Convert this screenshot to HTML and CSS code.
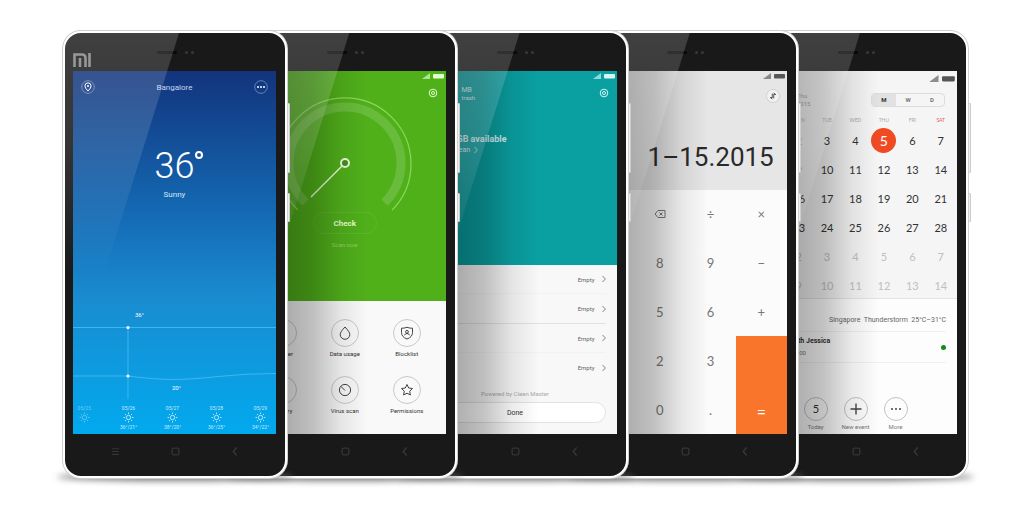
FILE: index.html
```html
<!DOCTYPE html>
<html lang="en">
<head>
<meta charset="utf-8">
<title>Mi phones</title>
<link rel="stylesheet" href="styles.css">
</head>
<body>
<svg class="defs" width="0" height="0" aria-hidden="true">
  <defs>
    <symbol id="status" viewBox="0 0 22 6"><path d="M0 6 8 0V6Z" opacity=".65"/><rect x="11" y="1" width="11" height="4.500" rx="1"/></symbol>
    <symbol id="home" viewBox="0 0 8 8"><rect x="1" y="1" width="6" height="6" rx="1.5" fill="none" stroke="#343434" stroke-width="1.2"/></symbol>
    <symbol id="back" viewBox="0 0 8 8"><path d="M5 0.5 2 4 5 7.5" fill="none" stroke="#383838" stroke-width="1.2"/></symbol>
    <symbol id="gear" viewBox="0 0 10 10"><circle cx="5" cy="5" r="3.8" fill="none" stroke="currentColor"/><circle cx="5" cy="5" r="1.5" fill="none" stroke="currentColor"/></symbol>
    <symbol id="chev" viewBox="0 0 4 8"><path d="M.5 1 3.4 4 .5 7" fill="none" stroke="currentColor" stroke-width=".8"/></symbol>
    <symbol id="sun" viewBox="0 0 12 12"><g fill="none" stroke="currentColor"><circle cx="6" cy="6" r="2.4"/><path d="M6 .6V2.2M6 9.8v1.6M.6 6h1.6M9.8 6h1.6M2.2 2.2l1.1 1.1M8.7 8.7l1.1 1.1M2.2 9.8l1.1-1.1M8.7 3.3l1.1-1.1"/></g></symbol>
  </defs>
</svg>
<main class="lineup">

  <section class="phone p1">
    <div class="face">
      <header class="bezel-top">
        <svg class="logo" viewBox="0 0 18 14" role="img" aria-label="Mi"><path d="M1.5 14V1.5H9Q12.500 1.500 12.500 5V14M7 5V14M16.500 0V14" fill="none" stroke="#858585" stroke-width="2.600"/></svg>
        <i class="speaker"></i><i class="sensor"></i><i class="sensor"></i>
      </header>
      <div class="screen weather">
        <div class="w-bar">
          <button class="w-btn" aria-label="Location"><svg viewBox="0 0 14 14"><circle cx="7" cy="7" r="6.300" fill="none" stroke="#8a9fd0" stroke-width=".7"/><path d="M7 11Q3.900 8 3.900 6a3.100 3.100 0 0 1 6.200 0Q10.100 8 7 11Z" fill="none" stroke="#fff"/><circle cx="7" cy="6" r="1" fill="#fff"/></svg></button>
          <span>Bangalore</span>
          <button class="w-btn" aria-label="More"><svg viewBox="0 0 14 14"><circle cx="7" cy="7" r="6.300" fill="none" stroke="#8a9fd0" stroke-width=".7"/><g fill="#fff"><circle cx="4" cy="7" r="1"/><circle cx="7" cy="7" r="1"/><circle cx="10" cy="7" r="1"/></g></svg></button>
        </div>
        <div class="temp">36<i class="degree"></i></div>
        <div class="cond">Sunny</div>
        <svg class="chart" viewBox="0 0 203 100">
          <g fill="none" stroke="#4cbcf1" stroke-width=".8"><path d="M0 22.500H203" /><path d="M55 22V94"/><path d="M0 71H55Q82 74.500 100 74.500Q118 74.500 145 71.500T203 68.500"/></g>
          <g fill="#fff"><circle cx="55" cy="22.500" r="1.600"/><circle cx="55" cy="71" r="1.600"/><text x="62" y="12">36°</text><text x="99" y="85">20°</text></g>
        </svg>
        <div class="days">
          <div class="past"><span>05/25</span><svg><use href="#sun"/></svg></div>
          <div><span>05/26</span><svg><use href="#sun"/></svg><span>36°/21°</span></div>
          <div><span>05/27</span><svg><use href="#sun"/></svg><span>38°/20°</span></div>
          <div><span>05/28</span><svg><use href="#sun"/></svg><span>36°/25°</span></div>
          <div><span>05/29</span><svg><use href="#sun"/></svg><span>34°/22°</span></div>
        </div>
      </div>
      <footer class="bezel-bottom"><svg viewBox="0 0 8 8"><path d="M1 1.500H7M1 4H7M1 6.500H7" stroke="#363636"/></svg><svg><use href="#home"/></svg><svg><use href="#back"/></svg></footer>
    </div>
    <i class="side long"></i><i class="side short"></i>
  </section>

  <section class="phone p2 behind">
    <div class="face">
      <header class="bezel-top"><i class="speaker"></i><i class="sensor"></i><i class="sensor"></i></header>
      <div class="screen security">
        <div class="green">
          <svg class="status"><use href="#status"/></svg>
          <button class="gear" aria-label="Settings"><svg><use href="#gear"/></svg></button>
          <svg class="gauge" viewBox="0 0 136 116" aria-hidden="true">
            <path d="M20.900 114.100A66 66 0 1 1 115.100 114.100" fill="none" stroke="#8fd65c" stroke-width="1.200"/>
            <path d="M28.400 106.600A56 56 0 1 1 107.600 106.600" fill="none" stroke="#69bc3b" stroke-width="9"/>
            <path d="M65 70 34 101" stroke="#e8ffd8" stroke-width="1.500"/>
            <circle cx="68" cy="67" r="4" fill="#4a8d24" stroke="#e8ffd8" stroke-width="2"/>
          </svg>
          <button class="check">Check</button>
          <span class="scan">Scan now</span>
        </div>
        <div class="tools">
          <button><svg viewBox="0 0 28 28"><circle cx="14" cy="14" r="13.500"/><path d="M15 8.500 18 12M18 9 19 10"/></svg><span>Cleaner</span></button>
          <button><svg viewBox="0 0 28 28"><circle cx="14" cy="14" r="13.500"/><path d="M14 8Q18.800 13 18.800 15.500a4.800 4.800 0 0 1-9.600 0Q9.200 13 14 8Z"/></svg><span>Data usage</span></button>
          <button><svg viewBox="0 0 28 28"><circle cx="14" cy="14" r="13.500"/><path d="M14 8.300Q17 9.400 19.500 9.200V13.500Q19.500 18 14 20Q8.500 18 8.500 13.500V9.200Q11 9.400 14 8.300Z"/><path d="M11.500 16.300Q12 14.500 14 14.500T16.500 16.300"/><circle cx="14" cy="12.800" r="1.400"/></svg><span>Blocklist</span></button>
          <button><svg viewBox="0 0 28 28"><circle cx="14" cy="14" r="13.500"/></svg><span>Battery</span></button>
          <button><svg viewBox="0 0 28 28"><circle cx="14" cy="14" r="13.500"/><circle cx="14" cy="14" r="5.600"/><path d="M14 14.500 10 10.500"/></svg><span>Virus scan</span></button>
          <button><svg viewBox="0 0 28 28"><circle cx="14" cy="14" r="13.500"/><path d="M14 8.500 15.700 12 19.500 12.500 16.700 15.200 17.400 19 14 17.200 10.600 19 11.300 15.200 8.500 12.500 12.300 12Z"/></svg><span>Permissions</span></button>
        </div>
      </div>
      <footer class="bezel-bottom"><i></i><svg><use href="#home"/></svg><svg><use href="#back"/></svg></footer>
    </div>
    <i class="side long"></i><i class="side short"></i>
  </section>

  <section class="phone p3 behind">
    <div class="face">
      <header class="bezel-top"><i class="speaker"></i><i class="sensor"></i><i class="sensor"></i></header>
      <div class="screen cleaner">
        <div class="teal">
          <svg class="status"><use href="#status"/></svg>
          <div class="c-bar"><div><b>MB</b><span>trash</span></div><button class="gear" aria-label="Settings"><svg><use href="#gear"/></svg></button></div>
          <strong>GB available</strong>
          <a href="#clean">Clean <svg><use href="#chev"/></svg></a>
        </div>
        <div class="rows">
          <a href="#r1">Empty <svg><use href="#chev"/></svg></a>
          <a href="#r2">Empty <svg><use href="#chev"/></svg></a>
          <a href="#r3">Empty <svg><use href="#chev"/></svg></a>
          <a href="#r4">Empty <svg><use href="#chev"/></svg></a>
          <small>Powered by Clean Master</small>
          <button class="done">Done</button>
        </div>
      </div>
      <footer class="bezel-bottom"><i></i><svg><use href="#home"/></svg><svg><use href="#back"/></svg></footer>
    </div>
    <i class="side long"></i><i class="side short"></i>
  </section>

  <section class="phone p4 behind">
    <div class="face">
      <header class="bezel-top"><i class="speaker"></i><i class="sensor"></i><i class="sensor"></i></header>
      <div class="screen calc">
        <div class="display">
          <svg class="status"><use href="#status"/></svg>
          <button class="swap" aria-label="Switch mode"><svg viewBox="0 0 14 14"><circle cx="7" cy="7" r="6.500" fill="#f2f2f2" stroke="#c4c4c4" stroke-width=".7"/><path d="M6.300 4.500V8.500H4.200L6.300 10M7.700 9.500V5.500H9.800L7.700 4" fill="none" stroke="#555"/></svg></button>
          <output>1–15.2015</output>
        </div>
        <div class="keys">
          <button class="c2" aria-label="Delete"><svg viewBox="0 0 12 10"><path d="M4 1.500H11V8.500H4L1 5ZM5.500 3.500l3 3M8.500 3.500l-3 3" fill="none" stroke="#777"/></svg></button><button>÷</button><button>×</button>
          <button class="c2">8</button><button>9</button><button>−</button>
          <button class="c2">5</button><button>6</button><button>+</button>
          <button class="c2">2</button><button>3</button><button class="equals">=</button>
          <button class="c2">0</button><button>.</button>
        </div>
      </div>
      <footer class="bezel-bottom"><i></i><svg><use href="#home"/></svg><svg><use href="#back"/></svg></footer>
    </div>
    <i class="side long"></i><i class="side short"></i>
  </section>

  <section class="phone p5 behind">
    <div class="face">
      <header class="bezel-top"><i class="speaker"></i><i class="sensor"></i><i class="sensor"></i></header>
      <div class="screen calendar">
        <div class="month">
          <svg class="status"><use href="#status"/></svg>
          <div class="m-bar"><div class="date"><span>Thu</span><span>2015</span></div><div class="seg"><button class="on">M</button><button>W</button><button>D</button></div></div>
          <table>
            <thead><tr><td></td><th>MON</th><th>TUE</th><th>WED</th><th>THU</th><th>FRI</th><th class="sat">SAT</th></tr></thead>
            <tbody>
              <tr><td></td><td>2</td><td>3</td><td>4</td><td><span class="today">5</span></td><td>6</td><td>7</td></tr>
              <tr><td></td><td>9</td><td>10</td><td>11</td><td>12</td><td>13</td><td>14</td></tr>
              <tr><td></td><td>16</td><td>17</td><td>18</td><td>19</td><td>20</td><td>21</td></tr>
              <tr><td></td><td>23</td><td>24</td><td>25</td><td>26</td><td>27</td><td>28</td></tr>
              <tr class="next"><td></td><td>2</td><td>3</td><td>4</td><td>5</td><td>6</td><td>7</td></tr>
              <tr class="next"><td></td><td>9</td><td>10</td><td>11</td><td>12</td><td>13</td><td>14</td></tr>
            </tbody>
          </table>
        </div>
        <div class="forecast">Singapore&nbsp; Thunderstorm&nbsp; 25°C–31°C</div>
        <div class="event"><div><b>with Jessica</b><span>10:00</span></div><i></i></div>
        <div class="actions">
          <button><svg viewBox="0 0 24 24"><circle cx="12" cy="12" r="11.500"/><text x="12" y="16" text-anchor="middle">5</text></svg><span>Today</span></button>
          <button><svg viewBox="0 0 24 24"><circle cx="12" cy="12" r="11.500"/><path d="M12 6.500V17.500M6.500 12H17.500"/></svg><span>New event</span></button>
          <button><svg viewBox="0 0 24 24"><circle cx="12" cy="12" r="11.500"/><path d="M7 12h2M11 12h2M15 12h2"/></svg><span>More</span></button>
        </div>
      </div>
      <footer class="bezel-bottom"><i></i><svg><use href="#home"/></svg><svg><use href="#back"/></svg></footer>
    </div>
    <i class="side long"></i><i class="side short"></i>
  </section>
</main>
</body>
</html>
```
FILE: styles.css
```css
* { box-sizing: border-box; }
body { margin: 0; background: #fff; font-family: Roboto, "Liberation Sans", sans-serif; font-size: 6px; }
button { border: 0; background: none; padding: 0; margin: 0; font: inherit; color: inherit; }
a { color: inherit; text-decoration: none; }
svg { display: block; }
.defs { position: absolute; }

.lineup { display: flex; justify-content: space-between; max-width: 1024px; margin: 0 auto; padding: 31px 56px 34px 63px; }
.phone { position: relative; flex: none; width: 224px; }
.phone + .phone { margin-left: -60px; }
.phone::before { content: ""; position: absolute; z-index: -1; left: -6px; right: -6px; bottom: -3px; height: 8px; border-radius: 50%; background: #777; filter: blur(3px); }
.p1 { z-index: 5; } .p2 { z-index: 4; } .p3 { z-index: 3; } .p4 { z-index: 2; } .p5 { z-index: 1; }

.face { position: relative; overflow: hidden; border: 2px solid #fff; border-radius: 18px; background: #19191a; box-shadow: 0 0 0 1px #cfcfcf; }
/* diagonal glass reflection */
.face::after { content: ""; position: absolute; inset: 0; pointer-events: none; background: linear-gradient(rgba(255,255,255,.17), rgba(255,255,255,.12) 25%, rgba(255,255,255,0) 55%); clip-path: polygon(0 0, 114px 0, 24px 290px, 0 290px); }
/* shade thrown by the phone in front */
.behind .screen::after { content: ""; position: absolute; inset: 0; pointer-events: none; background: linear-gradient(90deg, rgba(0,0,0,.32) 40px, rgba(0,0,0,.23) 70px, rgba(0,0,0,.08) 98px, rgba(0,0,0,0) 125px); }

.bezel-top { display: flex; align-items: center; justify-content: center; gap: 3px; height: 38px; position: relative; }
.speaker { width: 20px; height: 3px; border-radius: 2px; background: #080808; margin-right: 5px; }
.sensor { width: 3px; height: 3px; border-radius: 50%; background: #38383c; }
.logo { position: absolute; left: 8px; top: 20px; width: 18px; height: 14px; }
.screen { position: relative; margin: 0 9px 0 8px; min-height: 363px; overflow: hidden; display: flex; flex-direction: column; }
.bezel-bottom { display: grid; grid-template-columns: repeat(3, 60px); justify-content: center; justify-items: center; height: 42px; padding-top: 13px; }
.bezel-bottom svg { width: 9px; height: 9px; }
.side { position: absolute; z-index: -1; left: 222px; width: 5px; border: 1px solid #ccc; border-radius: 1px; background: #eee; }
.long { top: 72px; height: 70px; }
.short { top: 162px; height: 29px; }
.status { width: 22px; height: 6px; align-self: flex-end; flex: none; fill: currentColor; }
.gear { width: 14px; height: 14px; display: grid; place-items: center; border-radius: 50%; }
.gear svg { width: 10px; height: 10px; }

.weather { background: linear-gradient(#12347c, #1468b2 38%, #1a8bd0 62%, #02a9ee); color: #fff; }
.w-bar { display: flex; justify-content: space-between; align-items: center; padding: 9px 8px 0; font-size: 8px; color: #c9d6f2; }
.w-btn { width: 14px; height: 14px; }
.temp { display: flex; justify-content: center; margin-top: 52px; padding-left: 9px; font-size: 36px; font-weight: 300; line-height: 40px; }
.degree { width: 8px; height: 8px; margin: 5px 0 0 1px; border: 2px solid #fff; border-radius: 50%; }
.cond { text-align: center; font-size: 8px; line-height: 12px; margin-top: 3px; color: #d5e7f7; }
.chart { width: 100%; margin-top: 104px; font-size: 6px; }
.days { display: grid; grid-template-columns: repeat(5, 44px); justify-content: center; flex: 1; padding-right: 4px; font-size: 5px; line-height: 6px; color: #c6ebff; }
.days div { display: flex; flex-direction: column; align-items: center; gap: 1px; }
.days svg { width: 11px; height: 11px; }
.past { opacity: .5; }

.green { display: flex; flex-direction: column; align-items: center; height: 230px; padding: 2px 2px 0; background: #50b01a; color: #e3ffcf; }
.green .gear { align-self: flex-end; margin: 7px 4px 0 0; }
.gauge { width: 136px; height: 116px; margin-top: -4px; }
.check { width: 64px; height: 22px; border: 1px solid #5cb52d; border-radius: 11px; font-size: 8px; font-weight: 700; }
.scan { margin-top: 7px; line-height: 8px; color: #93d068; }
.tools { flex: 1; display: grid; grid-template-columns: repeat(3, 62px); justify-content: center; align-content: start; row-gap: 18px; padding-top: 18px; background: #f9f9f9; color: #333; }
.tools button { display: flex; flex-direction: column; align-items: center; gap: 3px; line-height: 8px; white-space: nowrap; }
.tools svg { width: 28px; height: 28px; fill: none; stroke: #444; }
.tools circle:first-child { stroke: #c9c9c9; }

.teal { height: 194px; display: flex; flex-direction: column; padding: 2px 2px 0; background: #0aa0a2; color: #d8f4f4; }
.c-bar { display: flex; justify-content: space-between; padding: 7px 4px 0 46px; line-height: 8px; }
.c-bar b, .c-bar span, .date span { display: block; }
.c-bar b { font-weight: 400; font-size: 7px; }
.teal strong { margin: 31px 0 0 41px; font-size: 9px; line-height: 12px; }
.teal a { display: flex; gap: 4px; align-items: center; margin: 1px 0 0 37px; font-size: 7px; line-height: 8px; }
.teal a svg, .rows a svg { width: 4px; height: 8px; }
.rows { flex: 1; display: flex; flex-direction: column; background: #f8f8f8; color: #666; padding: 0 11px; }
.rows a { display: flex; justify-content: flex-end; align-items: center; gap: 7px; height: 29px; border-bottom: 1px solid #f2f2f2; }
.rows a:nth-child(2) { border-color: #e2e2e2; height: 30px; }
.rows a:nth-child(4) { border: 0; }
.rows small { text-align: center; font-size: 6px; line-height: 8px; margin: 8px 0 4px; color: #aaa; }
.done { height: 21px; border: 1px solid #e2e2e2; border-radius: 11px; background: #fff; font-size: 7px; color: #333; }

.display { height: 119px; display: flex; flex-direction: column; align-items: flex-end; padding: 2px 2px 0; background: #e6e6e6; color: #555; }
.swap { width: 14px; height: 14px; margin: 10px 5px 0 0; }
.swap svg { width: 14px; }
.display output { margin: 38px 11px 0 0; font-size: 26px; line-height: 32px; color: #2a2a2a; }
.keys { flex: 1; display: grid; grid-template-columns: repeat(4, 1fr); grid-auto-rows: 1fr; background: #fbfbfb; font: 13px Lato, sans-serif; color: #777; }
.keys button { display: grid; place-items: center; }
.keys svg { width: 12px; height: 10px; }
.c2 { grid-column: 2; }
.keys .equals { grid-row: span 2; align-items: end; padding-bottom: 14px; background: #f9752b; color: #fff; font-size: 16px; line-height: 16px; }

.calendar { background: #fdfdfd; color: #333; }
.month { display: flex; flex-direction: column; height: 228px; background: #f5f5f5; padding: 4px 2px 0; border-bottom: 1px solid #e4e4e4; }
.month .status { width: 26px; height: 7px; color: #555; }
.m-bar { display: flex; justify-content: space-between; align-items: center; margin: 10px 10px 6px 41px; line-height: 8px; color: #999; }
.seg { display: grid; grid-template-columns: repeat(3, 24px); height: 14px; border: 1px solid #ddd; border-radius: 4px; overflow: hidden; font-weight: 700; color: #777; }
.seg .on { background: #e2e2e2; color: #333; }
table { width: 100%; table-layout: fixed; border-collapse: collapse; text-align: center; }
th, td { padding: 0; height: 29px; font: 11px Lato, sans-serif; }
th, thead td { height: 12px; font-size: 5px; color: #aaa; }
.sat { color: #e0584e; }
.today { display: grid; place-items: center; width: 25px; height: 25px; margin: 0 auto; border-radius: 50%; background: #f04a23; color: #fff; font-size: 14px; }
.next td { color: #c0c0c0; }
.forecast { padding: 16px 11px 6px; text-align: right; font-size: 7px; line-height: 10px; color: #666; }
.event { display: flex; justify-content: space-between; align-items: center; margin: 0 11px 0 37px; padding: 4px 0; border: solid #f0f0f0; border-width: 1px 0; font-size: 7px; line-height: 11px; }
.event b, .event span { display: block; }
.event span { font-size: 6px; color: #777; }
.event i { width: 5px; height: 5px; border-radius: 50%; background: #138a1c; }
.actions { display: grid; grid-template-columns: repeat(3, 40px); justify-content: center; margin-top: auto; padding-bottom: 3px; color: #777; }
.actions button { display: flex; flex-direction: column; align-items: center; gap: 2px; font-size: 6px; line-height: 8px; white-space: nowrap; }
.actions svg { width: 24px; height: 24px; fill: none; stroke: #444; stroke-width: 1.4px; }
.actions circle { stroke: #c2c2c2; stroke-width: 1px; }
.actions text { font: 11px Lato, sans-serif; fill: #333; stroke: none; }
```
